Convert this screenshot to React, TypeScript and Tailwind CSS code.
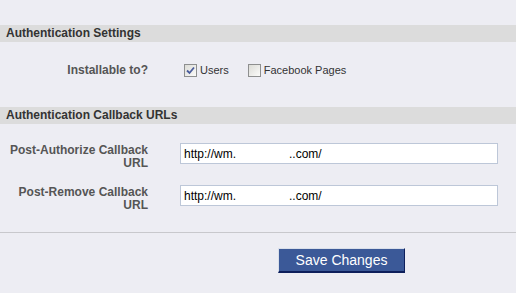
import React from "react";

const font = { fontFamily: '"Liberation Sans", Arial, sans-serif' };

const SectionHeader: React.FC<{ title: string }> = ({ title }) => (
  <div className="h-[17px] bg-[#dcdcdc] px-[6px] text-[12px] font-bold leading-[17px] text-[#333]">
    {title}
  </div>
);

const Checkbox: React.FC<{ checked?: boolean }> = ({ checked }) => (
  <span className="inline-flex h-[13px] w-[13px] items-center justify-center border border-[#8e8f8f] bg-gradient-to-br from-[#dcdcd7] to-[#fbfbf9]">
    {checked && (
      <svg width="9" height="9" viewBox="0 0 9 9">
        <path d="M1 4.5 L3.5 7 L8 1.5" fill="none" stroke="#4a5c9c" strokeWidth="1.8" />
      </svg>
    )}
  </span>
);

const UrlField: React.FC<{ hidden: number }> = ({ hidden }) => (
  <div className="flex h-[21px] w-[318px] items-center border border-[#bdc7d8] bg-white pl-[3px] text-[12px] text-black">
    <span>http://wm.</span>
    <span className="inline-block" style={{ width: hidden }} />
    <span>..com/</span>
  </div>
);

const UrlRow: React.FC<{ label: string }> = ({ label }) => (
  <div className="flex h-[21px] items-start">
    <div className="w-[148px] pt-[1px] text-right text-[12px] font-bold leading-[13px] text-[#555]">
      {label}
      <br />
      URL
    </div>
    <div className="ml-[32px]">
      <UrlField hidden={53} />
    </div>
  </div>
);

export default function App() {
  return (
    <div className="h-[293px] w-[516px] bg-[#ededf3] pt-[25px]" style={font}>
      <SectionHeader title="Authentication Settings" />

      <div className="flex h-[13px] items-center mt-[22px] mb-[30px]">
        <div className="w-[148px] text-right text-[12px] font-bold leading-[13px] text-[#555]">
          Installable to?
        </div>
        <div className="ml-[36px] flex items-center text-[11px] leading-[13px] text-[#333]">
          <Checkbox checked />
          <span className="ml-[3px]">Users</span>
          <span className="ml-[19px] flex">
            <Checkbox />
          </span>
          <span className="ml-[3px]">Facebook Pages</span>
        </div>
      </div>

      <SectionHeader title="Authentication Callback URLs" />

      <div className="flex flex-col gap-[21px] pt-[19px]">
        <UrlRow label="Post-Authorize Callback" />
        <UrlRow label="Post-Remove Callback" />
      </div>

      <div className="mt-[26px] h-px bg-[#c8c8cc]" />

      <div className="pt-[15px] pl-[278px]">
        <button
          type="button"
          className="h-[25px] w-[127px] border border-t-[#d9dfea] border-l-[#d9dfea] border-r-[#0e1f5b] border-b-2 border-b-[#0e1f5b] bg-[#3b5998] text-[14px] leading-none text-white"
        >
          Save Changes
        </button>
      </div>
    </div>
  );
}
